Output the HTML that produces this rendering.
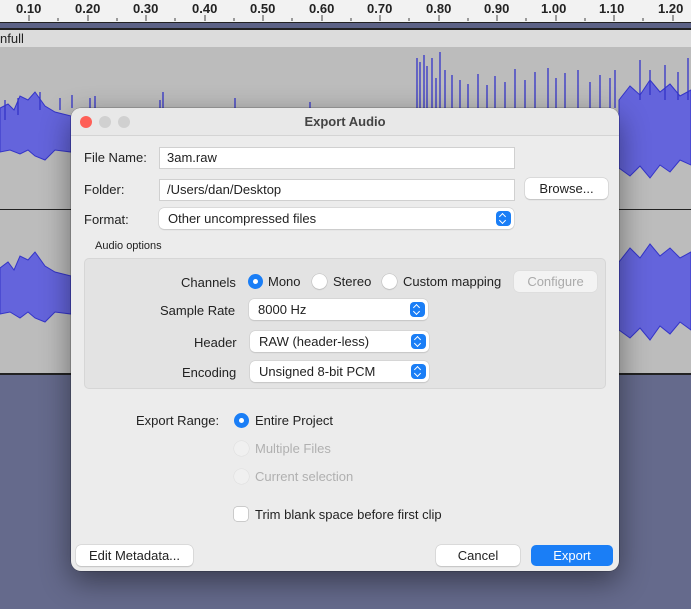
<!DOCTYPE html>
<html><head><meta charset="utf-8"><style>
*{box-sizing:border-box;margin:0;padding:0}
body{width:691px;height:609px;overflow:hidden;position:relative;font-family:"Liberation Sans",sans-serif;background:#656a8c}
.abs{position:absolute}
.lbl{position:absolute;font-size:13px;color:#222}
.field{position:absolute;background:#fff;border:1px solid #d0d0d0;font-size:13px;color:#222;padding-left:7px;line-height:20px;height:22px}
.pop{position:absolute;background:#fff;border-radius:5px;box-shadow:0 0 0 .5px #c8c8c8,0 1px 1px rgba(0,0,0,.15);font-size:13px;color:#222;padding-left:9px;line-height:21px;height:21px}
.pop i{position:absolute;right:3px;top:3px;width:15px;height:15px;background:#1a7ef6;border-radius:4px}
.pop i:before{content:"";position:absolute;left:4px;top:3px;width:4px;height:4px;border-left:1.5px solid #fff;border-top:1.5px solid #fff;transform:rotate(45deg)}
.pop i:after{content:"";position:absolute;left:4px;top:7px;width:4px;height:4px;border-right:1.5px solid #fff;border-bottom:1.5px solid #fff;transform:rotate(45deg)}
.btn{position:absolute;background:#fff;border-radius:5px;box-shadow:0 0 0 .5px #c8c8c8,0 1px 1px rgba(0,0,0,.2);font-size:13px;color:#222;text-align:center;line-height:21px;height:21px}
.rad{position:absolute;width:15px;height:15px;border-radius:50%;background:#fff;box-shadow:0 0 0 .5px #bbb,0 1px 1px rgba(0,0,0,.15)}
.rad.on{background:#1a7ef6;box-shadow:none}
.rad.on:after{content:"";position:absolute;left:5px;top:5px;width:5px;height:5px;border-radius:50%;background:#fff}
.rad.dis{background:#f0f0f0;box-shadow:0 0 0 .5px #ddd}
.rl span{position:absolute;top:1px}
</style></head><body>
<div class="abs" style="left:0;top:0;width:691px;height:22px;background:#f2f2f2"></div>
<svg class="abs" style="left:0;top:0" width="691" height="22"><g stroke="#444" stroke-width="1">
<path d="M29 15V21M58 18V21M88 15V21M117 18V21M146 15V21M175 18V21M205 15V21M234 18V21M263 15V21M292 18V21M322 15V21M351 18V21M380 15V21M409 18V21M439 15V21M468 18V21M497 15V21M526 18V21M556 15V21M585 18V21M614 15V21M643 18V21M673 15V21"/></g></svg>
<div class="abs rl" style="left:0;top:0;width:691px;height:22px;font-size:13px;font-weight:bold;color:#222">
<span style="left:16px">0.10</span><span style="left:75px">0.20</span><span style="left:133px">0.30</span><span style="left:192px">0.40</span><span style="left:250px">0.50</span><span style="left:309px">0.60</span><span style="left:367px">0.70</span><span style="left:426px">0.80</span><span style="left:484px">0.90</span><span style="left:541px">1.00</span><span style="left:599px">1.10</span><span style="left:658px">1.20</span></div>
<div class="abs" style="left:0;top:22px;width:691px;height:8px;background:#5c6286;border-top:1px solid #222;border-bottom:2px solid #222"></div>
<div class="abs" style="left:0;top:30px;width:691px;height:17px;background:#dcdcdc;font-size:13px;color:#222;line-height:17px">nfull</div>
<div class="abs" style="left:0;top:47px;width:691px;height:162px;background:#bcbcbc"></div>
<div class="abs" style="left:0;top:209px;width:691px;height:1px;background:#222"></div>
<div class="abs" style="left:0;top:210px;width:691px;height:163px;background:#bcbcbc"></div>
<div class="abs" style="left:0;top:373px;width:691px;height:2px;background:#222"></div>
<svg class="abs" style="left:0;top:0" width="691" height="609">
<g fill="#6464dc" stroke="#3434c8" stroke-width="1">
<path d="M0 108 L8 104 L14 110 L20 96 L28 100 L35 92 L45 106 L55 112 L71 116 L71 152 L55 150 L45 160 L35 156 L28 150 L20 154 L10 150 L0 152 Z"/>
<path d="M0 268 L8 262 L14 270 L20 256 L28 260 L35 252 L45 266 L55 272 L71 276 L71 314 L55 312 L45 322 L35 318 L28 312 L20 318 L10 312 L0 314 Z"/>
<path d="M619 100 L630 86 L640 95 L650 80 L660 92 L670 84 L680 96 L691 90 L691 165 L680 160 L670 172 L660 165 L650 178 L640 166 L630 176 L619 168 Z"/>
<path d="M619 262 L630 248 L640 258 L650 244 L660 256 L670 248 L680 258 L691 252 L691 330 L680 322 L670 334 L660 326 L650 340 L640 328 L630 338 L619 330 Z"/>
</g>
<g stroke="#3434c8" stroke-width="1.3">
<path d="M5 120V100M18 115V98M40 110V92M60 110V98M72 108V95M90 108V98M95 108V96M160 108V100M163 108V92M235 108V98M310 108V102M417 108V58M420 108V62M424 108V55M427 108V66M432 108V58M436 108V78M440 108V52M445 108V70M452 108V75M460 108V80M468 108V84M478 108V74M487 108V85M495 108V76M505 108V82M515 108V69M525 108V80M535 108V72M548 108V68M556 108V78M565 108V73M578 108V70M590 108V82M600 108V75M610 108V78M615 108V70"/>
<path d="M640 100V60M650 95V70M665 100V65M678 100V72M688 100V58"/>
</g>
</svg>
<div class="abs" style="left:71px;top:108px;width:548px;height:463px;background:#ececec;border-radius:10px;box-shadow:0 10px 30px rgba(0,0,0,.45),0 0 0 .5px rgba(0,0,0,.3);overflow:hidden">
<div class="abs" style="left:0;top:0;width:548px;height:28px;border-bottom:1px solid #d4d4d4;background:#e8e8e8"></div>
<div class="abs" style="left:9px;top:8px;width:12px;height:12px;border-radius:50%;background:#fe5f57"></div>
<div class="abs" style="left:28px;top:8px;width:12px;height:12px;border-radius:50%;background:#d0d0d0"></div>
<div class="abs" style="left:47px;top:8px;width:12px;height:12px;border-radius:50%;background:#d0d0d0"></div>
<div class="abs" style="left:0;top:6px;width:548px;text-align:center;font-size:13px;font-weight:bold;color:#444">Export Audio</div>
</div>
<div class="lbl" style="left:84px;top:150px">File Name:</div>
<div class="field" style="left:159px;top:147px;width:356px">3am.raw</div>
<div class="lbl" style="left:84px;top:182px">Folder:</div>
<div class="field" style="left:159px;top:179px;width:356px">/Users/dan/Desktop</div>
<div class="btn" style="left:525px;top:178px;width:83px">Browse...</div>
<div class="lbl" style="left:84px;top:212px">Format:</div>
<div class="pop" style="left:159px;top:208px;width:355px">Other uncompressed files<i></i></div>
<div class="lbl" style="left:95px;top:240px;font-size:11px">Audio options</div>
<div class="abs" style="left:84px;top:258px;width:522px;height:131px;background:#e3e3e3;border:1px solid #d6d6d6;border-radius:5px"></div>
<div class="lbl" style="left:181px;top:275px">Channels</div>
<div class="rad on" style="left:248px;top:274px"></div><div class="lbl" style="left:268px;top:274px">Mono</div>
<div class="rad" style="left:312px;top:274px"></div><div class="lbl" style="left:333px;top:274px">Stereo</div>
<div class="rad" style="left:382px;top:274px"></div><div class="lbl" style="left:403px;top:274px">Custom mapping</div>
<div class="btn" style="left:514px;top:271px;width:83px;background:#f3f3f3;color:#aaa;box-shadow:0 0 0 .5px #d8d8d8">Configure</div>
<div class="lbl" style="left:160px;top:303px">Sample Rate</div>
<div class="pop" style="left:249px;top:299px;width:179px">8000 Hz<i></i></div>
<div class="lbl" style="left:194px;top:335px">Header</div>
<div class="pop" style="left:250px;top:331px;width:179px">RAW (header-less)<i></i></div>
<div class="lbl" style="left:182px;top:365px">Encoding</div>
<div class="pop" style="left:250px;top:361px;width:179px">Unsigned 8-bit PCM<i></i></div>
<div class="lbl" style="left:136px;top:413px">Export Range:</div>
<div class="rad on" style="left:234px;top:413px"></div><div class="lbl" style="left:255px;top:413px">Entire Project</div>
<div class="rad dis" style="left:234px;top:441px"></div><div class="lbl" style="left:255px;top:441px;color:#b0b0b0">Multiple Files</div>
<div class="rad dis" style="left:234px;top:469px"></div><div class="lbl" style="left:255px;top:469px;color:#b0b0b0">Current selection</div>
<div class="abs" style="left:234px;top:507px;width:14px;height:14px;background:#fff;border-radius:3px;box-shadow:0 0 0 .5px #aaa"></div>
<div class="lbl" style="left:255px;top:507px">Trim blank space before first clip</div>
<div class="btn" style="left:76px;top:545px;width:117px">Edit Metadata...</div>
<div class="btn" style="left:436px;top:545px;width:84px">Cancel</div>
<div class="btn" style="left:531px;top:545px;width:82px;background:#1a7ef6;color:#fff;box-shadow:none">Export</div>
</body></html>
